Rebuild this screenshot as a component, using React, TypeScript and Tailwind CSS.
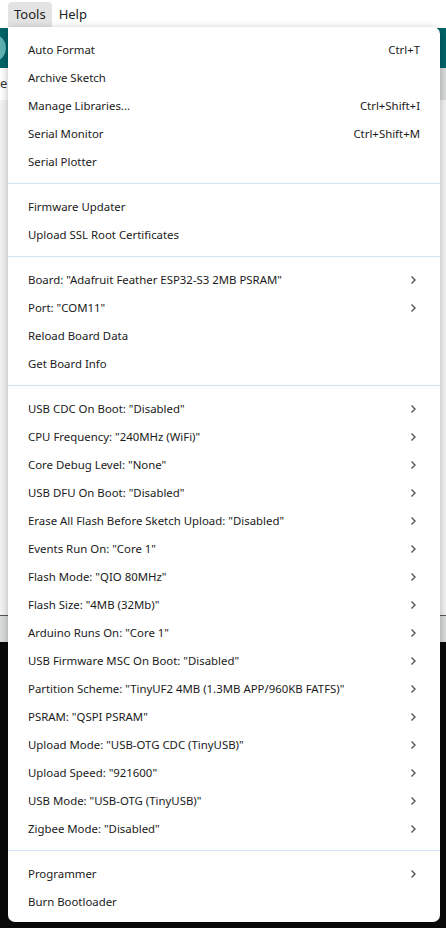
import React from "react";

type Item = { label: string; shortcut?: string; sub?: boolean };

const sections: Item[][] = [
  [
    { label: "Auto Format", shortcut: "Ctrl+T" },
    { label: "Archive Sketch" },
    { label: "Manage Libraries...", shortcut: "Ctrl+Shift+I" },
    { label: "Serial Monitor", shortcut: "Ctrl+Shift+M" },
    { label: "Serial Plotter" },
  ],
  [{ label: "Firmware Updater" }, { label: "Upload SSL Root Certificates" }],
  [
    { label: 'Board: "Adafruit Feather ESP32-S3 2MB PSRAM"', sub: true },
    { label: 'Port: "COM11"', sub: true },
    { label: "Reload Board Data" },
    { label: "Get Board Info" },
  ],
  [
    { label: 'USB CDC On Boot: "Disabled"', sub: true },
    { label: 'CPU Frequency: "240MHz (WiFi)"', sub: true },
    { label: 'Core Debug Level: "None"', sub: true },
    { label: 'USB DFU On Boot: "Disabled"', sub: true },
    { label: 'Erase All Flash Before Sketch Upload: "Disabled"', sub: true },
    { label: 'Events Run On: "Core 1"', sub: true },
    { label: 'Flash Mode: "QIO 80MHz"', sub: true },
    { label: 'Flash Size: "4MB (32Mb)"', sub: true },
    { label: 'Arduino Runs On: "Core 1"', sub: true },
    { label: 'USB Firmware MSC On Boot: "Disabled"', sub: true },
    { label: 'Partition Scheme: "TinyUF2 4MB (1.3MB APP/960KB FATFS)"', sub: true },
    { label: 'PSRAM: "QSPI PSRAM"', sub: true },
    { label: 'Upload Mode: "USB-OTG CDC (TinyUSB)"', sub: true },
    { label: 'Upload Speed: "921600"', sub: true },
    { label: 'USB Mode: "USB-OTG (TinyUSB)"', sub: true },
    { label: 'Zigbee Mode: "Disabled"', sub: true },
  ],
  [{ label: "Programmer", sub: true }, { label: "Burn Bootloader" }],
];

function Chevron() {
  return (
    <svg width="16" height="10" viewBox="0 0 16 10" className="shrink-0">
      <path d="M7.5 1.5 L11 5 L7.5 8.5" fill="none" stroke="#555" strokeWidth="1.4" />
    </svg>
  );
}

export default function App() {
  return (
    <div
      className="relative w-[446px] h-[928px] overflow-hidden bg-white"
      style={{ fontFamily: '"Noto Sans", "Open Sans", sans-serif' }}
    >
      {/* background app */}
      <div className="flex flex-col h-full">
        <div className="h-[28px] bg-white flex items-end pl-2 text-[13px] text-[#222]">
          <div className="h-[26px] px-[6px] flex items-center bg-[#e3e3e3] rounded-t-[4px]">Tools</div>
          <div className="h-[26px] px-[7px] flex items-center">Help</div>
        </div>
        <div className="h-[40px] bg-[#006468] relative">
          <div className="absolute left-[-22px] top-[6px] w-[28px] h-[28px] rounded-full bg-[#5fb3b3]" />
        </div>
        <div className="h-[32px] bg-[#dadcdc] flex">
          <div className="w-[20px] bg-white text-[13px] text-[#333] pt-[6px]">e</div>
        </div>
        <div className="flex-1 bg-[#f3f3f3]" />
        <div className="h-[27px] bg-[#dadcdc] border-t border-[#555]" />
        <div className="h-[286px] bg-[#0a0a0a]" />
      </div>

      {/* dropdown menu */}
      <div className="absolute left-[8px] top-[27px] w-[432px] bg-white rounded-[7px] rounded-tl-none shadow-[0_2px_8px_rgba(0,0,0,0.28)] pt-[8px] pb-[7px] text-[11.4px] text-[#1a1a1a]">
        {sections.map((sec, si) => (
          <div key={si}>
            {si > 0 && (
              <div className="h-[17px] flex items-center">
                <div className="h-px w-full bg-[#d3e2f7]" />
              </div>
            )}
            {sec.map((it, ii) => (
              <div key={ii} className="h-[28px] pt-px flex items-center justify-between pl-[20px] pr-[20px]">
                <span className="whitespace-nowrap">{it.label}</span>
                {it.shortcut && <span className="whitespace-nowrap">{it.shortcut}</span>}
                {it.sub && <Chevron />}
              </div>
            ))}
          </div>
        ))}
      </div>
    </div>
  );
}
